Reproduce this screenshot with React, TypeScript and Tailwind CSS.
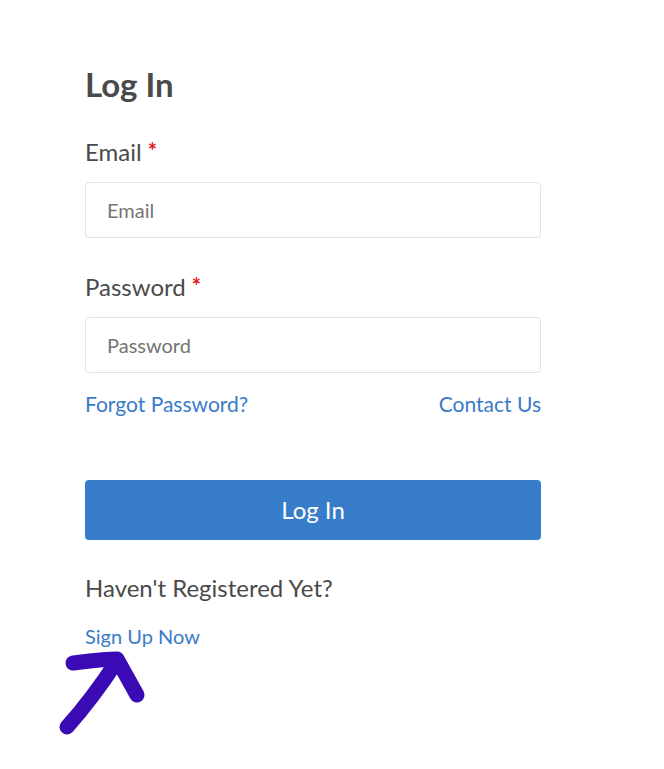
const Label = ({ text }: { text: string }) => (
  <label className="text-[24px] leading-none text-[#4a4a4a]">
    {text}
    <span className="ml-[6px] text-[#e3161b] text-[22px] font-bold relative top-[-2px]">*</span>
  </label>
);

const Field = ({ label, type }: { label: string; type: string }) => (
  <div className="flex flex-col gap-[18px]">
    <Label text={label} />
    <input
      type={type}
      placeholder={label}
      className="h-[56px] w-full rounded-[4px] border border-[#e2e2e2] px-[21px] text-[20px] text-[#4a4a4a] placeholder:text-[#757575] outline-none"
    />
  </div>
);

export default function App() {
  return (
    <div
      className="min-h-[769px] w-[664px] bg-white"
      style={{ fontFamily: "Lato, 'Open Sans', sans-serif" }}
    >
      <div className="w-[456px] ml-[85px] pt-[68px] flex flex-col">
        <h1 className="text-[33px] font-bold leading-none text-[#4a4a4a]">Log In</h1>

        <div className="mt-[39px] flex flex-col gap-[37px]">
          <Field label="Email" type="email" />
          <Field label="Password" type="password" />
        </div>

        <div className="mt-[20px] flex justify-between text-[21px] leading-none text-[#3a7bc8]">
          <a href="#">Forgot Password?</a>
          <a href="#">Contact Us</a>
        </div>

        <button className="mt-[66px] h-[60px] w-full rounded-[4px] bg-[#387dca] text-[24px] text-white">
          Log In
        </button>

        <p className="mt-[36px] text-[24px] leading-none text-[#4a4a4a]">
          Haven't Registered Yet?
        </p>
        <a href="#" className="mt-[26px] text-[20px] leading-none text-[#3a7bc8]">
          Sign Up Now
        </a>
      </div>

      <svg width="100" height="90" viewBox="0 0 100 90" className="ml-[55px] mt-[1px]">
        <g fill="none" stroke="#3a0bb5" strokeWidth="15" strokeLinecap="round" strokeLinejoin="round">
          <path d="M12 80 C30 60 45 40 62 14" />
          <path d="M18 16 C35 14 50 12 62 12 L82 48" />
        </g>
      </svg>
    </div>
  );
}
